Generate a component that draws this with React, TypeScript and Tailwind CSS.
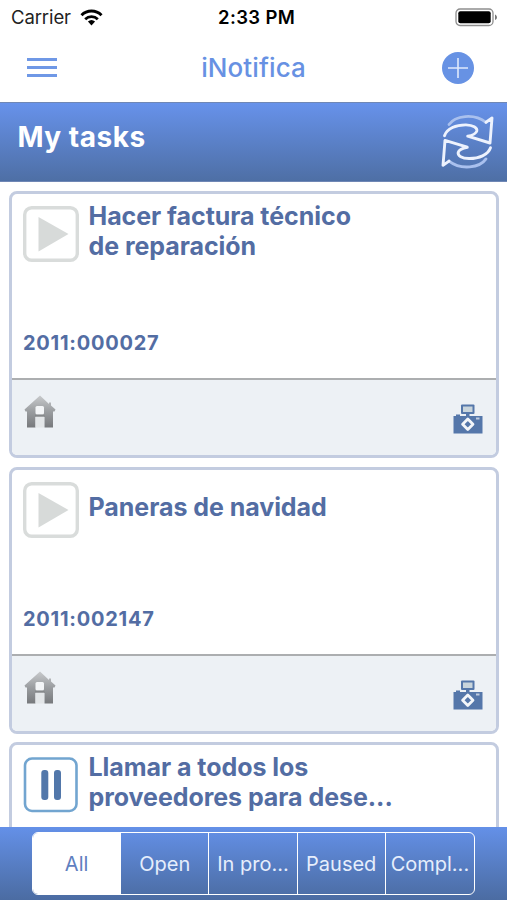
import { useState } from "react";

type Task = {
  title: string[];
  code?: string;
  paused?: boolean;
};

const tasks: Task[] = [
  { title: ["Hacer factura técnico", "de reparación"], code: "2011:000027" },
  { title: ["Paneras de navidad"], code: "2011:002147" },
  {
    title: ["Llamar a todos los", "proveedores para dese..."],
    paused: true,
  },
];

const filters = ["All", "Open", "In pro...", "Paused", "Compl..."];

function StatusBar() {
  return (
    <div className="relative flex h-[34px] items-center justify-between pr-[9px] pl-[11px] text-black">
      <div className="flex items-center gap-[9px]">
        <span className="pt-[2px] text-[18.5px] tracking-[-0.1px] text-[#222]">
          Carrier
        </span>
        <svg width="23" height="17" viewBox="0 0 23 17">
          <path
            d="M1.5 6.2a14.3 14.3 0 0 1 20 0"
            fill="none"
            stroke="#000"
            strokeWidth="3"
          />
          <path
            d="M5.2 10.2a9 9 0 0 1 12.6 0"
            fill="none"
            stroke="#000"
            strokeWidth="2.8"
          />
          <path d="M7.9 12.6a5.4 5.4 0 0 1 7.2 0L11.5 16.4z" />
        </svg>
      </div>
      <span className="absolute left-[218px] pt-[2px] text-[18.5px] font-semibold tracking-[0.35px]">
        2:33 PM
      </span>
      <svg width="43" height="19" viewBox="0 0 43 19">
        <rect
          x="1"
          y="1"
          width="37"
          height="16.5"
          rx="4"
          fill="none"
          stroke="#8e8e8e"
          strokeWidth="1.3"
        />
        <rect x="3.3" y="3.3" width="32.4" height="12" rx="2" />
        <path d="M40 6.5c2.6 1 2.6 4.6 0 5.6z" fill="#777" />
      </svg>
    </div>
  );
}

function RefreshArrow() {
  return (
    <g fill="none" strokeLinejoin="round" strokeLinecap="round">
      <path
        d="M9 10.5C15 1.5 34-1 46 8.3"
        stroke="#a9c0ee"
        strokeWidth="2.8"
      />
      <path
        d="M4.5 21.7C7 14.5 16 10.8 26 10.9C33 11.2 37.5 13.5 36.8 17C36 20 32.5 21.3 27.7 22.2L50 29L52 4L46 8.3"
        stroke="#edf2fd"
        strokeWidth="2.9"
      />
    </g>
  );
}

function PlayButton() {
  return (
    <svg width="56" height="56" viewBox="0 0 56 56" className="shrink-0">
      <rect
        x="1.7"
        y="1.7"
        width="52.6"
        height="52.6"
        rx="7"
        fill="#fff"
        stroke="#d9dcdb"
        strokeWidth="3.4"
      />
      <path d="M15.5 11v34.5L45.5 28z" fill="#d7dad9" />
    </svg>
  );
}

function PauseButton() {
  return (
    <svg width="56" height="56" viewBox="0 0 56 56" className="shrink-0">
      <rect
        x="2"
        y="1.5"
        width="51.5"
        height="52.5"
        rx="7"
        fill="#fff"
        stroke="#72a5d0"
        strokeWidth="2.6"
      />
      <rect x="18.3" y="13" width="7" height="30" rx="3" fill="#5277aa" />
      <rect x="31" y="13" width="7" height="30" rx="3" fill="#5277aa" />
    </svg>
  );
}

function HouseIcon() {
  return (
    <svg width="32" height="34" viewBox="0 0 32 34">
      <defs>
        <linearGradient id="house" x1="0" y1="0" x2="0" y2="1">
          <stop offset="0" stopColor="#c8cacc" />
          <stop offset="0.5" stopColor="#9a9da0" />
          <stop offset="1" stopColor="#77797c" />
        </linearGradient>
      </defs>
      <path
        d="M16 0.5L0.5 14.5L1.5 16.5H3V32.5H11.5V22H20.5V32.5H29V16.5H30.5L31.5 14.5L27 10.5V7.5H25V9z"
        fill="url(#house)"
      />
      <rect x="11.5" y="11" width="8.5" height="8.5" rx="1.5" fill="#f3f5f7" />
      <path d="M11.5 21.5H20V32.5H11.5z" fill="#e3e6e8" />
      <path d="M11 20.7H20.5" stroke="#85888a" strokeWidth="1.8" />
    </svg>
  );
}

function CameraIcon() {
  return (
    <svg width="30" height="30" viewBox="0 0 30 30">
      <rect x="8" y="0.5" width="13.5" height="9.5" rx="1" fill="#5577aa" />
      <rect x="10" y="2.5" width="9.5" height="5.5" fill="#c9d5dc" />
      <path d="M13 10h3.5v2H13z" fill="#5577aa" />
      <path d="M3 12v-1.5h4V12h22.5v17.5H0.5V12z" fill="#5577aa" />
      <path d="M23 13.5h3.5v2H23z" fill="#bfccdf" />
      <path
        d="M14.8 15L20 20.2L14.8 25.4L9.6 20.2z"
        fill="#5577aa"
        stroke="#f3f6fa"
        strokeWidth="2.8"
        strokeLinejoin="round"
      />
    </svg>
  );
}

function TaskCard({ task }: { task: Task }) {
  return (
    <div className="flex h-[267px] shrink-0 flex-col overflow-hidden rounded-[8px] border-3 border-[#c3cce0] bg-white">
      <div className="flex h-[184px] flex-col justify-between pt-[7px] pb-[22px] pl-[11px]">
        <div className="flex gap-[9.5px]">
          <div className="pt-[5px]">
            {task.paused ? <PauseButton /> : <PlayButton />}
          </div>
          <div className="flex h-[60px] flex-col justify-center text-[25px] leading-[30px] font-bold tracking-[-0.05px] whitespace-nowrap text-[#536da3]">
            {task.title.map((line) => (
              <span key={line}>{line}</span>
            ))}
          </div>
        </div>
        {task.code && (
          <span className="text-[20px] leading-[26px] font-bold tracking-[0.75px] text-[#536da3]">
            {task.code}
          </span>
        )}
      </div>
      <div className="flex flex-1 justify-between border-t-2 border-[#acaeb0] bg-[#edf1f5] pr-[13.5px] pl-[12px]">
        <div className="pt-[15px]">
          <HouseIcon />
        </div>
        <div className="pt-[24px]">
          <CameraIcon />
        </div>
      </div>
    </div>
  );
}

export default function App() {
  const [active, setActive] = useState("All");

  return (
    <div className="flex h-[900px] w-[507px] flex-col overflow-hidden bg-white font-['Inter','Liberation_Sans',sans-serif]">
      <StatusBar />

      <header className="flex h-[68px] items-center justify-between pr-[32px] pl-[27px] text-[#6791e3]">
        <button className="flex w-[30px] flex-col gap-[5px] pb-[2px]">
          <span className="h-[3px] bg-[#6f98e6]" />
          <span className="h-[3px] bg-[#6f98e6]" />
          <span className="h-[3px] bg-[#6f98e6]" />
        </button>
        <h1 className="pb-[2px] pl-[8px] text-[26px] font-medium tracking-[0.1px]">
          iNotifica
        </h1>
        <button>
          <svg width="33" height="33" viewBox="0 0 33 33">
            <circle cx="16" cy="16" r="16" fill="#6792e4" />
            <path d="M16 6v20M6 16h20" stroke="#dfe9fc" strokeWidth="1.6" />
          </svg>
        </button>
      </header>

      <div className="flex h-[80px] shrink-0 justify-between border-y border-[#6f87b5] bg-linear-to-b from-[#6792eb] to-[#4e6fa5] pr-[11px] pl-[17.5px]">
        <h2 className="pt-[16px] text-[28px] leading-[36px] font-bold tracking-[0.5px] text-white">
          My tasks
        </h2>
        <svg width="56" height="56" viewBox="0 0 56 56" className="mt-[11px]">
          <RefreshArrow />
          <g transform="rotate(180 27.5 27.7)">
            <RefreshArrow />
          </g>
        </svg>
      </div>

      <div className="flex min-h-0 flex-1 flex-col gap-[8.5px] overflow-hidden pt-[9px] pr-[8px] pl-[9px]">
        {tasks.map((task) => (
          <TaskCard key={task.title[0]} task={task} />
        ))}
      </div>

      <div className="flex h-[73px] shrink-0 bg-linear-to-b from-[#6490e8] to-[#4b6ca2] px-[32px] pt-[5px] pb-[5px]">
        <div className="grid w-full grid-cols-5 divide-x divide-white overflow-hidden rounded-[6px] border border-white">
          {filters.map((f) => (
            <button
              key={f}
              onClick={() => setActive(f)}
              className={
                f === active
                  ? "bg-white text-[20px] text-[#5f80c0]"
                  : "text-[20px] text-[#e6eefc]"
              }
            >
              {f}
            </button>
          ))}
        </div>
      </div>
    </div>
  );
}
